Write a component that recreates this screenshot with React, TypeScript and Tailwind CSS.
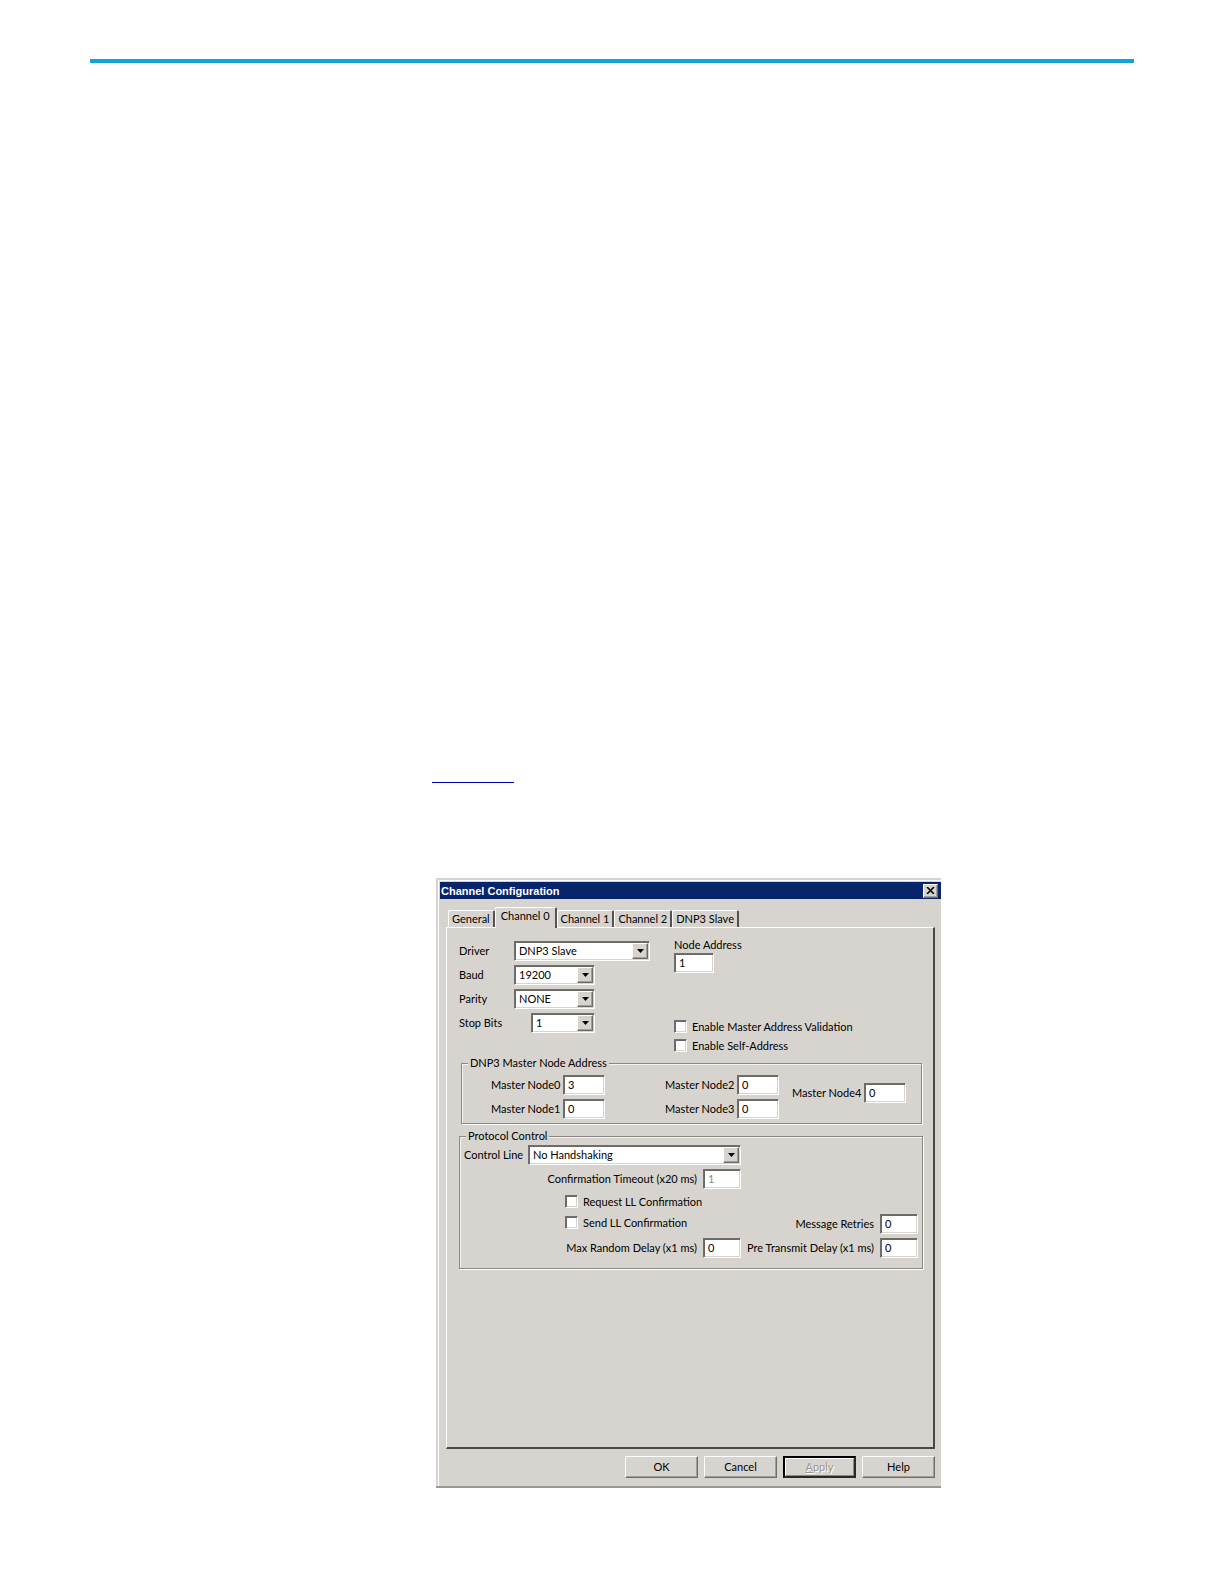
import { useState } from "react"
import type { ReactNode } from "react"

const tabs = ["General", "Channel 0", "Channel 1", "Channel 2", "DNP3 Slave"]

const sunken =
  "bg-white border border-t-[#6f6f6f] border-l-[#6f6f6f] border-b-white border-r-white shadow-[inset_1px_1px_0_#6b6966,inset_-1px_-1px_0_#d7d4cf]"
const raised =
  "bg-[#d7d4cf] border border-t-white border-l-white border-b-[#6f6c69] border-r-[#6f6c69] shadow-[inset_-1px_-1px_0_#a19e99]"

function TextBox({ id, value, width = "w-[42px]", disabled = false }: { id: string; value: string; width?: string; disabled?: boolean }) {
  return (
    <input
      id={id}
      defaultValue={value}
      disabled={disabled}
      className={`h-5 shrink-0 pb-0.5 pl-1 outline-none disabled:text-[#8a8784] ${width} ${sunken}`}
    />
  )
}

function Field({ id, label, value }: { id: string; label: string; value: string }) {
  return (
    <div className="flex items-center">
      <label htmlFor={id} className="w-[72px]">{label}</label>
      <TextBox id={id} value={value} />
    </div>
  )
}

function DelayField({ id, label, value, disabled = false }: { id: string; label: string; value: string; disabled?: boolean }) {
  return (
    <div className="flex items-center justify-end gap-1.5">
      <label htmlFor={id}>{label}</label>
      <TextBox id={id} value={value} width="w-[38px]" disabled={disabled} />
    </div>
  )
}

function Select({ id, options, width }: { id: string; options: string[]; width: string }) {
  return (
    <div className={`relative ${width}`}>
      <select id={id} className={`block h-5 w-full appearance-none pl-1 pr-5 outline-none ${sunken}`}>
        {options.map((o) => (
          <option key={o}>{o}</option>
        ))}
      </select>
      <span className={`pointer-events-none absolute right-0.5 top-0.5 flex h-4 w-4 items-center justify-center ${raised}`}>
        <svg width="7" height="4" viewBox="0 0 7 4">
          <path d="M0 0h7L3.5 4z" fill="#000" />
        </svg>
      </span>
    </div>
  )
}

function SelectRow({ id, label, options, width }: { id: string; label: string; options: string[]; width: string }) {
  return (
    <div className="flex items-center">
      <label htmlFor={id} className="flex-1">{label}</label>
      <Select id={id} options={options} width={width} />
    </div>
  )
}

function CheckBox({ label }: { label: string }) {
  return (
    <label className="flex h-[19px] items-center gap-[5px]">
      <input
        type="checkbox"
        className={`h-[13px] w-[13px] appearance-none checked:bg-[#404040] ${sunken}`}
      />
      {label}
    </label>
  )
}

function Group({ title, className, children }: { title: string; className: string; children: ReactNode }) {
  return (
    <fieldset className={`min-w-0 border border-[#8b8884] px-1 shadow-[1px_1px_0_#fff,inset_1px_1px_0_#f4f3f1] ${className}`}>
      <legend className="ml-0.5 bg-[#d7d4cf] px-0.5 leading-4">{title}</legend>
      {children}
    </fieldset>
  )
}

function DialogButton({ children, className = raised, disabled = false }: { children: ReactNode; className?: string; disabled?: boolean }) {
  return (
    <button disabled={disabled} className={`h-[22px] w-[73px] ${className}`}>
      {children}
    </button>
  )
}

export default function App() {
  const [active, setActive] = useState("Channel 0")

  return (
    <div className="min-h-screen bg-white px-[90px] pt-[59px] font-['Lato','Liberation_Sans',sans-serif] text-[11px] leading-4 text-black">
      <hr className="h-1 border-0 bg-[#12a3d8]" />

      <main className="pl-[342px] pt-[719px]">
        <hr className="h-px w-[82px] border-0 bg-[#0000b4]" />

        <section className="ml-1 mt-[95px] max-w-[505px] border-b-2 border-[#9b9996] bg-[#d7d4cf] pl-0.5 pt-0.5">
          <div className="border-l border-t border-white pb-2 pl-px pt-px">
            <header className="flex h-[17px] items-center justify-between bg-[#08246b] pl-px pr-[3px] text-white">
              <h1 className="font-['Liberation_Sans',sans-serif] font-bold">Channel Configuration</h1>
              <button aria-label="Close" className={`flex h-[14px] w-[15px] items-center justify-center ${raised}`}>
                <svg width="9" height="7" viewBox="0 0 9 7" stroke="#000" strokeWidth="1.6">
                  <path d="M1 0l7 7M8 0L1 7" />
                </svg>
              </button>
            </header>

            <div role="tablist" className="flex items-end pl-2 pt-2">
              {tabs.map((tab) => (
                <button
                  key={tab}
                  role="tab"
                  aria-selected={tab === active}
                  onClick={() => setActive(tab)}
                  className={`relative rounded-t-[2px] border-l border-r-2 border-t border-l-white border-r-[#55524f] border-t-white bg-[#d7d4cf] ${
                    tab === active ? "-mb-px h-[21px] px-[5px] pb-1" : "h-[17px] px-[3px]"
                  }`}
                >
                  {tab}
                </button>
              ))}
            </div>

            <div
              role="tabpanel"
              className="mx-1.5 min-h-[522px] border-b-2 border-l border-r-2 border-t border-b-[#4a4845] border-l-white border-r-[#4a4845] border-t-white pl-3 pr-2.5 pt-[9px]"
            >
              <div className="flex">
                <div className="flex w-[191px] flex-col gap-1 pt-1">
                  <SelectRow id="driver" label="Driver" options={["DNP3 Slave"]} width="w-[136px]" />
                  <div className="flex w-[136px] flex-col gap-1">
                    <SelectRow id="baud" label="Baud" options={["19200"]} width="w-[81px]" />
                    <SelectRow id="parity" label="Parity" options={["NONE"]} width="w-[81px]" />
                    <SelectRow id="stop-bits" label="Stop Bits" options={["1"]} width="w-[64px]" />
                  </div>
                </div>
                <div className="pl-6">
                  <label htmlFor="node-address" className="block">Node Address</label>
                  <TextBox id="node-address" value="1" width="block w-10" />
                  <div className="pt-11">
                    <CheckBox label="Enable Master Address Validation" />
                    <CheckBox label="Enable Self-Address" />
                  </div>
                </div>
              </div>

              <Group title="DNP3 Master Node Address" className="ml-0.5 mr-px pb-1">
                <div className="flex items-start pl-[25px]">
                  <div className="flex flex-col gap-1 pt-1">
                    <Field id="node0" label="Master Node0" value="3" />
                    <Field id="node1" label="Master Node1" value="0" />
                  </div>
                  <div className="flex flex-col gap-1 pl-[60px] pt-1">
                    <Field id="node2" label="Master Node2" value="0" />
                    <Field id="node3" label="Master Node3" value="0" />
                  </div>
                  <div className="pl-[13px] pt-3">
                    <Field id="node4" label="Master Node4" value="0" />
                  </div>
                </div>
              </Group>

              <Group title="Protocol Control" className="mt-1 pb-2.5 pt-px">
                <div className="flex items-center">
                  <label htmlFor="control-line" className="w-16">Control Line</label>
                  <Select id="control-line" options={["No Handshaking"]} width="w-[213px]" />
                </div>
                <div className="flex items-end justify-between pt-1">
                  <div className="w-[277px]">
                    <DelayField id="timeout" label="Confirmation Timeout (x20 ms)" value="1" disabled />
                    <div className="flex flex-col gap-0.5 pb-1.5 pl-[101px] pt-[3px]">
                      <CheckBox label="Request LL Confirmation" />
                      <CheckBox label="Send LL Confirmation" />
                    </div>
                    <DelayField id="random-delay" label="Max Random Delay (x1 ms)" value="0" />
                  </div>
                  <div className="flex flex-col gap-1">
                    <DelayField id="retries" label="Message Retries" value="0" />
                    <DelayField id="transmit-delay" label="Pre Transmit Delay (x1 ms)" value="0" />
                  </div>
                </div>
              </Group>
            </div>

            <footer className="flex justify-end gap-1.5 pr-1.5 pt-[7px]">
              <DialogButton>OK</DialogButton>
              <DialogButton>Cancel</DialogButton>
              <DialogButton
                disabled
                className="border-2 border-b-[#2b2927] border-l-black border-r-[#2b2927] border-t-black bg-[#d7d4cf] text-[#98958f] shadow-[inset_1px_1px_0_#fff,inset_-1px_-1px_0_#8b8884] [text-shadow:1px_1px_0_#fff]"
              >
                <u>A</u>pply
              </DialogButton>
              <DialogButton>Help</DialogButton>
            </footer>
          </div>
        </section>
      </main>
    </div>
  )
}
